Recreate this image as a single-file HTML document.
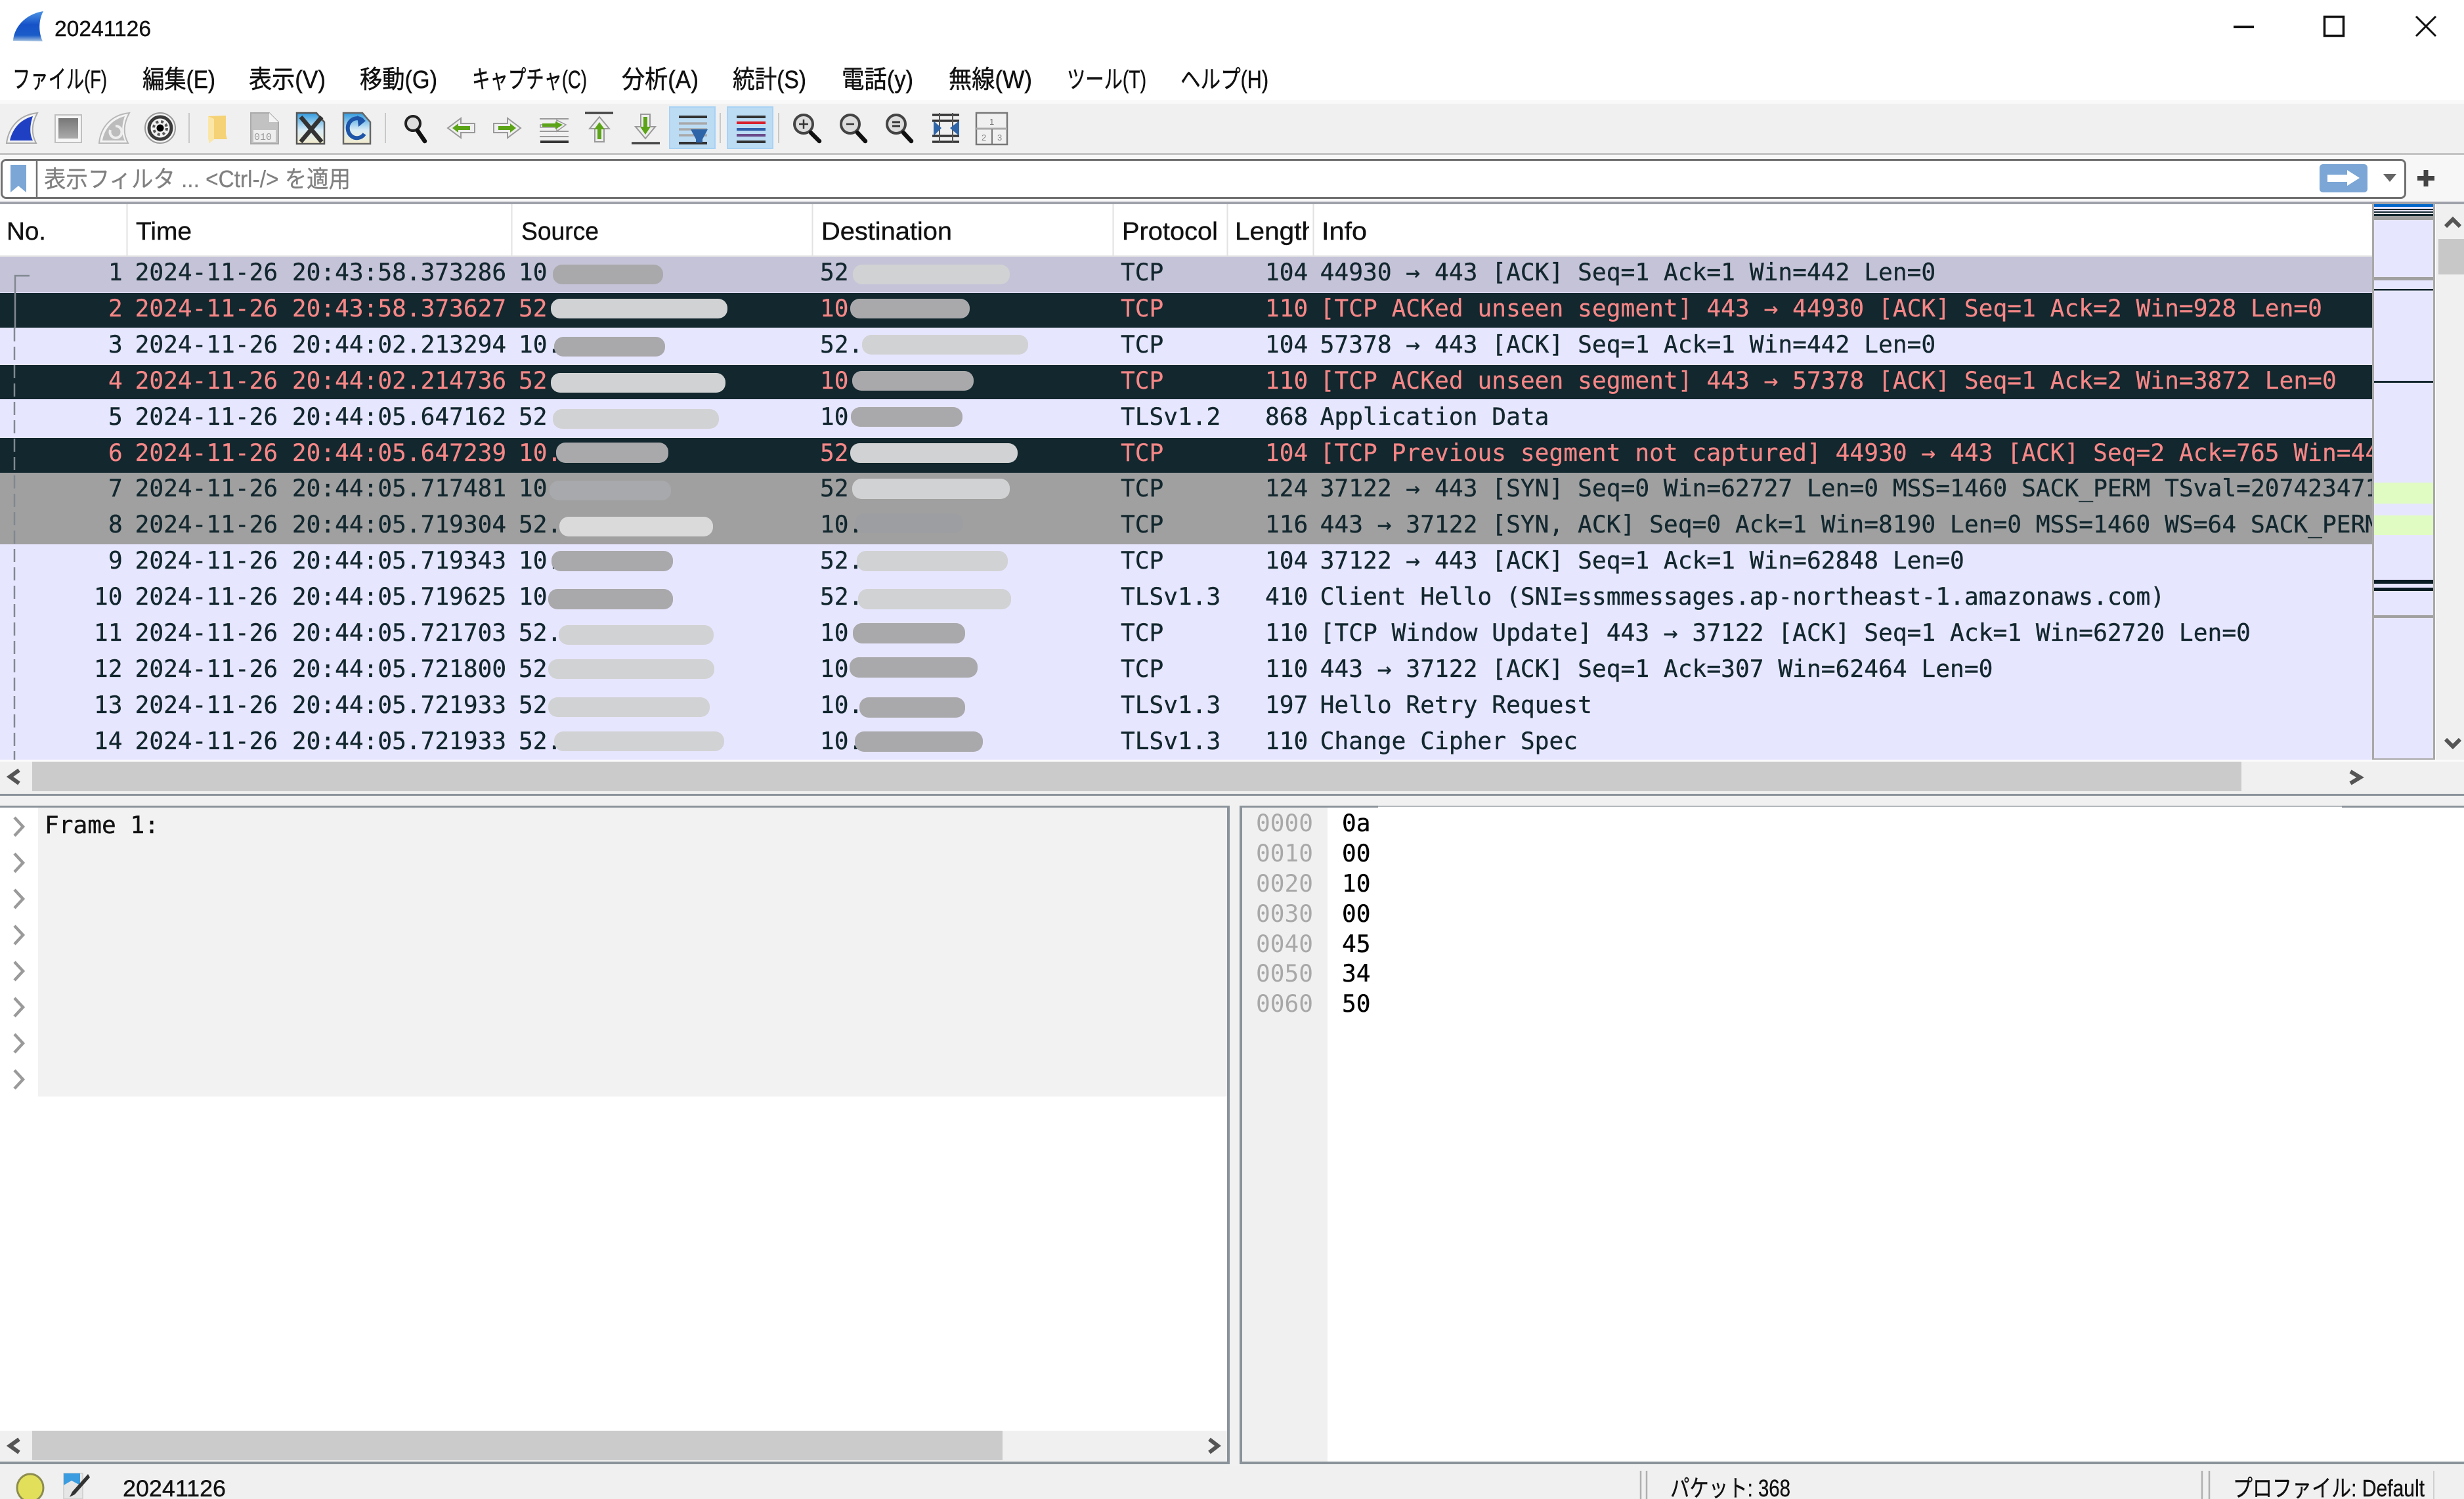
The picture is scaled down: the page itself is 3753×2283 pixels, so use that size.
<!DOCTYPE html>
<html lang="ja">
<head>
<meta charset="utf-8">
<title>20241126</title>
<style>
html,body{margin:0;padding:0;background:#fff;width:3753px;height:2283px;overflow:hidden}
svg{display:block}
text{white-space:pre}
.m{font-family:"DejaVu Sans Mono","Liberation Mono",monospace;font-size:36.13px}
.i{font-size:36.22px}
.u{font-family:"Liberation Sans","Noto Sans CJK JP",sans-serif}
.j{font-family:"Liberation Sans","Noto Sans CJK JP",sans-serif;font-size:38px;fill:#111;stroke:#111;stroke-width:.5px}
.h{font-family:"Liberation Sans","Noto Sans CJK JP",sans-serif;font-size:38px;fill:#111;stroke:#111;stroke-width:.4px}
.n{fill:#12272e;stroke:#12272e;stroke-width:.35px}
.r{fill:#f78787;stroke:#f78787;stroke-width:.2px}
</style>
</head>
<body>
<svg xmlns="http://www.w3.org/2000/svg" width="3753" height="2283" viewBox="0 0 3753 2283">
<defs>
<linearGradient id="fin" x1="0" y1="0" x2="0" y2="1"><stop offset="0" stop-color="#4d94e4"/><stop offset=".45" stop-color="#1552c8"/><stop offset=".8" stop-color="#1a5cc8"/><stop offset="1" stop-color="#a8c4e0"/></linearGradient>
<linearGradient id="stp" x1="0" y1="0" x2="0" y2="1"><stop offset="0" stop-color="#777"/><stop offset="1" stop-color="#aaa"/></linearGradient>
<linearGradient id="sky" x1="0" y1="0" x2="0" y2="1"><stop offset="0" stop-color="#2e9ae0"/><stop offset=".55" stop-color="#d8ecf6"/><stop offset="1" stop-color="#f4eccc"/></linearGradient>
<clipPath id="cInfo"><rect x="2002" y="391" width="1611" height="770"/></clipPath>
<clipPath id="cLen"><rect x="1872" y="320" width="122" height="70"/></clipPath>
</defs>

<!-- chrome backgrounds -->
<rect width="3753" height="2283" fill="#fff"/>
<rect y="152" width="3753" height="6" fill="#f9f9f9"/>
<rect y="158" width="3753" height="75" fill="#f0f0f0"/>
<rect y="233" width="3753" height="3" fill="#c4c4c4"/>
<rect y="236" width="3753" height="70" fill="#f7f7f7"/>
<rect y="307" width="3753" height="4" fill="#9ea0aa"/>

<!-- title bar -->
<path d="M20 62C21 44 36 22 66 17C58 32 59 50 65 63Z" fill="url(#fin)"/>
<text x="83" y="55" class="u" font-size="33" fill="#111" stroke="#111" stroke-width=".4" textLength="147" lengthAdjust="spacingAndGlyphs">20241126</text>
<rect x="3402" y="39" width="31" height="4" fill="#111"/>
<rect x="3540.5" y="25.5" width="29" height="29" fill="none" stroke="#111" stroke-width="3.5"/>
<path d="M3680 25L3710 55M3710 25L3680 55" stroke="#111" stroke-width="3" fill="none"/>

<!-- menu -->
<text x="19" y="134" class="j" textLength="144" lengthAdjust="spacingAndGlyphs">ファイル(F)</text>
<text x="217" y="134" class="j" textLength="111" lengthAdjust="spacingAndGlyphs">編集(E)</text>
<text x="379" y="134" class="j" textLength="117" lengthAdjust="spacingAndGlyphs">表示(V)</text>
<text x="548" y="134" class="j" textLength="118" lengthAdjust="spacingAndGlyphs">移動(G)</text>
<text x="719" y="134" class="j" textLength="175" lengthAdjust="spacingAndGlyphs">キャプチャ(C)</text>
<text x="947" y="134" class="j" textLength="117" lengthAdjust="spacingAndGlyphs">分析(A)</text>
<text x="1116" y="134" class="j" textLength="112" lengthAdjust="spacingAndGlyphs">統計(S)</text>
<text x="1282" y="134" class="j" textLength="109" lengthAdjust="spacingAndGlyphs">電話(y)</text>
<text x="1445" y="134" class="j" textLength="127" lengthAdjust="spacingAndGlyphs">無線(W)</text>
<text x="1625" y="134" class="j" textLength="121" lengthAdjust="spacingAndGlyphs">ツール(T)</text>
<text x="1798" y="134" class="j" textLength="134" lengthAdjust="spacingAndGlyphs">ヘルプ(H)</text>

<!-- toolbar -->
<path d="M10 218C13 195 28 175 57 172C47 190 48 205 55 218Z" fill="#f4f4f4" stroke="#aaa" stroke-width="2"/>
<path d="M15 214C19 196 31 182 50 177C45 192 45 204 50 214Z" fill="#2040c4"/>
<rect x="84" y="175" width="40" height="42" fill="#f6f6f6" stroke="#c0c0c0" stroke-width="2"/>
<rect x="89" y="180" width="30" height="31" fill="url(#stp)"/>
<path d="M151 218C153 195 168 175 197 172C187 190 188 205 195 218Z" fill="#f4f4f4" stroke="#b8b8b8" stroke-width="2"/>
<path d="M156 214C159 196 171 182 190 177C185 192 185 204 190 214Z" fill="#bcbcbc"/>
<path d="M176 192a9 9 0 1 1-8 6" fill="none" stroke="#eee" stroke-width="4"/>
<circle cx="244" cy="195" r="23" fill="#f4f4f4" stroke="#9a9a9a" stroke-width="2"/>
<circle cx="244" cy="195" r="17" fill="#f2f2f2" stroke="#3a3a3a" stroke-width="5"/>
<circle cx="244" cy="195" r="10" fill="#eee" stroke="#555" stroke-width="4" stroke-dasharray="4 4"/>
<circle cx="244" cy="195" r="5.500" fill="#000"/>
<rect x="287" y="172" width="2" height="46" fill="#c8c8c8"/>
<path d="M317 177L344 176V205L346 212L326 212L319 218L317 210Z" fill="#f5d275"/>
<path d="M317 177L326 181V212L319 218L317 210Z" fill="#fbe6a8"/>
<path d="M382 172H410L424 186V219H382Z" fill="#c2c2c2" stroke="#aaa" stroke-width="2"/>
<path d="M410 172V186H424Z" fill="#f4f4f4"/>
<rect x="386" y="198" width="34" height="18" fill="#eee"/>
<text x="387" y="213" font-family="'Liberation Mono',monospace" font-size="15" fill="#999">010</text>
<path d="M452 172H482L494 186V219H452Z" fill="url(#sky)" stroke="#555" stroke-width="2.5"/>
<path d="M458 178L490 216M490 178L458 216" stroke="#333" stroke-width="6.5" fill="none"/>
<path d="M523 172H552L564 186V219H523Z" fill="url(#sky)" stroke="#666" stroke-width="2.5"/>
<path d="M553 184a14 15 0 1 0 2 20" fill="none" stroke="#1d55a8" stroke-width="6"/>
<path d="M544 176l13 8-11 9z" fill="#1d55a8"/>
<rect x="586" y="172" width="2" height="46" fill="#c8c8c8"/>
<circle cx="629" cy="188" r="11" fill="#ddd" stroke="#222" stroke-width="4"/>
<path d="M636 199L647 215" stroke="#111" stroke-width="6.5" stroke-linecap="round"/>
<path d="M682 195L702 180V188H723V202H702V210Z" fill="#eee" stroke="#999" stroke-width="2"/>
<path d="M689 195L698 188V192H716V198H698V202Z" fill="#5ba417"/>
<path d="M793 195L773 180V188H752V202H773V210Z" fill="#eee" stroke="#999" stroke-width="2"/>
<path d="M786 195L777 188V192H759V198H777V202Z" fill="#5ba417"/>
<path d="M822 181H866M822 200H866M822 208H866" stroke="#999" stroke-width="2"/>
<path d="M823 216H866" stroke="#333" stroke-width="4"/>
<path d="M823 190H848V183L862 190L848 200V194H823Z" fill="#eee" stroke="#999" stroke-width="1.5"/>
<path d="M826 188H846V185L857 190L846 197V193H826Z" fill="#5ba417"/>
<path d="M891 172H934" stroke="#444" stroke-width="3.5"/>
<path d="M913 178L928 196H920V216H906V196H898Z" fill="#eee" stroke="#999" stroke-width="2"/>
<path d="M913 186L921 197H916V212H910V197H905Z" fill="#5ba417"/>
<path d="M962 218H1005" stroke="#444" stroke-width="3.5"/>
<path d="M983 211L998 193H990V174H976V193H968Z" fill="#eee" stroke="#999" stroke-width="2"/>
<path d="M983 205L991 193H986V178H980V193H975Z" fill="#5ba417"/>
<rect x="1020" y="163" width="69" height="63" fill="#bcdcf4" stroke="#a8d2f4" stroke-width="2"/>
<path d="M1034 178H1077" stroke="#333" stroke-width="4"/>
<path d="M1034 188H1077M1034 197H1077M1034 206H1077" stroke="#a9a9a9" stroke-width="3.5"/>
<path d="M1034 218H1077" stroke="#333" stroke-width="4"/>
<path d="M1052 197H1078L1070 212H1060Z" fill="#2e65a8"/>
<rect x="1060" y="210" width="10" height="7" fill="#2e65a8"/>
<rect x="1096" y="172" width="2" height="46" fill="#c8c8c8"/>
<rect x="1108" y="163" width="69" height="63" fill="#bcdcf4" stroke="#a8d2f4" stroke-width="2"/>
<path d="M1122 178H1166" stroke="#333" stroke-width="4"/>
<path d="M1122 187H1166" stroke="#d8202c" stroke-width="4"/>
<path d="M1122 197H1166" stroke="#2e5fa8" stroke-width="4"/>
<path d="M1122 206H1166" stroke="#6a4a8a" stroke-width="4"/>
<path d="M1122 216H1166" stroke="#333" stroke-width="4"/>
<rect x="1185" y="172" width="2" height="46" fill="#c8c8c8"/>
<g fill="#ddd" stroke="#444" stroke-width="4"><circle cx="1224" cy="189" r="14"/><circle cx="1295" cy="189" r="14"/><circle cx="1365" cy="189" r="14"/></g>
<path d="M1235 202L1248 215M1306 202L1318 215M1376 202L1388 215" stroke="#111" stroke-width="6.5" stroke-linecap="round"/>
<path d="M1217 189H1231M1224 182V196M1289 189H1301" stroke="#333" stroke-width="2.5"/>
<path d="M1359 186H1371M1359 192H1371" stroke="#333" stroke-width="3"/>
<path d="M1420 175H1461M1420 184H1461M1420 207H1461M1420 216H1461" stroke="#333" stroke-width="3.5"/>
<path d="M1431 172V218M1451 172V218" stroke="#555" stroke-width="2"/>
<path d="M1422 184L1434 195L1422 207ZM1461 184L1447 195L1461 207Z" fill="#2e65a8"/>
<rect x="1487" y="172" width="47" height="48" fill="#f0f0f0" stroke="#777" stroke-width="2.5"/>
<path d="M1487 196H1534" stroke="#aaa" stroke-width="3"/>
<path d="M1511 197V220" stroke="#777" stroke-width="2"/>
<text x="1507" y="190" class="u" font-size="13" fill="#777">1</text>
<text x="1495" y="214" class="u" font-size="13" fill="#888">2</text>
<text x="1519" y="214" class="u" font-size="13" fill="#888">3</text>

<!-- filter bar -->
<rect x="2.5" y="243.5" width="3661" height="58" rx="7" fill="#fff" stroke="#707070" stroke-width="3"/>
<path d="M56 243V302" stroke="#707070" stroke-width="2.5"/>
<path d="M16 251H40V293L28 283L16 293Z" fill="#7ba6d5"/>
<text x="67" y="285" class="u" font-size="36" fill="#808080" stroke="#808080" stroke-width=".3" textLength="467" lengthAdjust="spacingAndGlyphs">表示フィルタ ... &lt;Ctrl-/&gt; を適用</text>
<rect x="3533" y="250" width="73" height="43" rx="5" fill="#7ba6d5"/>
<path d="M3545 266H3575V259L3594 271L3575 283V277H3545Z" fill="#fff"/>
<path d="M3630 265H3650L3640 277Z" fill="#666"/>
<path d="M3695 259V284M3682 271.500H3708" stroke="#444" stroke-width="7"/>

<!-- header -->
<rect y="311" width="3613" height="80" fill="#fff"/>
<rect y="389" width="3613" height="2" fill="#e3e3e3"/>
<path d="M193.500 311V390M779.500 311V390M1237.500 311V390M1695.500 311V390M1869.500 311V390M2000.500 311V390" stroke="#e2e2e2" stroke-width="2"/>
<text x="10" y="365" class="h" textLength="60" lengthAdjust="spacingAndGlyphs">No.</text>
<text x="207" y="365" class="h" textLength="85" lengthAdjust="spacingAndGlyphs">Time</text>
<text x="794" y="365" class="h" textLength="118" lengthAdjust="spacingAndGlyphs">Source</text>
<text x="1251" y="365" class="h" textLength="199" lengthAdjust="spacingAndGlyphs">Destination</text>
<text x="1709" y="365" class="h" textLength="146" lengthAdjust="spacingAndGlyphs">Protocol</text>
<g clip-path="url(#cLen)"><text x="1881" y="365" class="h" textLength="124" lengthAdjust="spacingAndGlyphs">Length</text></g>
<text x="2013" y="365" class="h" textLength="69" lengthAdjust="spacingAndGlyphs">Info</text>

<!-- rows -->
<rect y="391" width="3613" height="766" fill="#e7e6ff"/>
<rect y="391" width="3613" height="54" fill="#c5c3d8"/>
<rect y="446" width="3613" height="53" fill="#12272e"/>
<rect y="556" width="3613" height="52" fill="#12272e"/>
<rect y="667" width="3613" height="53" fill="#12272e"/>
<rect y="720" width="3613" height="109" fill="#a0a0a0"/>

<path d="M45 420H23V500" fill="none" stroke="#808890" stroke-width="2.5"/>
<path d="M22 500V1157" fill="none" stroke="#808890" stroke-width="2.5" stroke-dasharray="20 8"/>

<g class="m n">
<text x="165" y="427">1</text><text x="205.600" y="427">2024-11-26 20:43:58.373286</text><text x="790" y="427">10</text><text x="1249" y="427">52</text><text x="1707" y="427">TCP</text><text x="1927" y="427">104</text>
<text x="165" y="537">3</text><text x="205.600" y="537">2024-11-26 20:44:02.213294</text><text x="790" y="537">10.</text><text x="1249" y="537">52.</text><text x="1707" y="537">TCP</text><text x="1927" y="537">104</text>
<text x="165" y="647">5</text><text x="205.600" y="647">2024-11-26 20:44:05.647162</text><text x="790" y="647">52</text><text x="1249" y="647">10</text><text x="1707" y="647">TLSv1.2</text><text x="1927" y="647">868</text>
<text x="165" y="756">7</text><text x="205.600" y="756">2024-11-26 20:44:05.717481</text><text x="790" y="756">10</text><text x="1249" y="756">52</text><text x="1707" y="756">TCP</text><text x="1927" y="756">124</text>
<text x="165" y="811">8</text><text x="205.600" y="811">2024-11-26 20:44:05.719304</text><text x="790" y="811">52.</text><text x="1249" y="811">10.</text><text x="1707" y="811">TCP</text><text x="1927" y="811">116</text>
<text x="165" y="866">9</text><text x="205.600" y="866">2024-11-26 20:44:05.719343</text><text x="790" y="866">10.</text><text x="1249" y="866">52.</text><text x="1707" y="866">TCP</text><text x="1927" y="866">104</text>
<text x="143" y="921">10</text><text x="205.600" y="921">2024-11-26 20:44:05.719625</text><text x="790" y="921">10</text><text x="1249" y="921">52.</text><text x="1707" y="921">TLSv1.3</text><text x="1927" y="921">410</text>
<text x="143" y="976">11</text><text x="205.600" y="976">2024-11-26 20:44:05.721703</text><text x="790" y="976">52.</text><text x="1249" y="976">10</text><text x="1707" y="976">TCP</text><text x="1927" y="976">110</text>
<text x="143" y="1031">12</text><text x="205.600" y="1031">2024-11-26 20:44:05.721800</text><text x="790" y="1031">52</text><text x="1249" y="1031">10</text><text x="1707" y="1031">TCP</text><text x="1927" y="1031">110</text>
<text x="143" y="1086">13</text><text x="205.600" y="1086">2024-11-26 20:44:05.721933</text><text x="790" y="1086">52</text><text x="1249" y="1086">10.</text><text x="1707" y="1086">TLSv1.3</text><text x="1927" y="1086">197</text>
<text x="143" y="1141">14</text><text x="205.600" y="1141">2024-11-26 20:44:05.721933</text><text x="790" y="1141">52.</text><text x="1249" y="1141">10.</text><text x="1707" y="1141">TLSv1.3</text><text x="1927" y="1141">110</text>
</g>
<g class="m r">
<text x="165" y="482">2</text><text x="205.600" y="482">2024-11-26 20:43:58.373627</text><text x="790" y="482">52</text><text x="1249" y="482">10</text><text x="1707" y="482">TCP</text><text x="1927" y="482">110</text>
<text x="165" y="592">4</text><text x="205.600" y="592">2024-11-26 20:44:02.214736</text><text x="790" y="592">52</text><text x="1249" y="592">10</text><text x="1707" y="592">TCP</text><text x="1927" y="592">110</text>
<text x="165" y="702">6</text><text x="205.600" y="702">2024-11-26 20:44:05.647239</text><text x="790" y="702">10.</text><text x="1249" y="702">52</text><text x="1707" y="702">TCP</text><text x="1927" y="702">104</text>
</g>
<g clip-path="url(#cInfo)">
<g class="m i n">
<text x="2010.600" y="427">44930 → 443 [ACK] Seq=1 Ack=1 Win=442 Len=0</text>
<text x="2010.600" y="537">57378 → 443 [ACK] Seq=1 Ack=1 Win=442 Len=0</text>
<text x="2010.600" y="647">Application Data</text>
<text x="2010.600" y="756">37122 → 443 [SYN] Seq=0 Win=62727 Len=0 MSS=1460 SACK_PERM TSval=2074234712</text>
<text x="2010.600" y="811">443 → 37122 [SYN, ACK] Seq=0 Ack=1 Win=8190 Len=0 MSS=1460 WS=64 SACK_PERM</text>
<text x="2010.600" y="866">37122 → 443 [ACK] Seq=1 Ack=1 Win=62848 Len=0</text>
<text x="2010.600" y="921">Client Hello (SNI=ssmmessages.ap-northeast-1.amazonaws.com)</text>
<text x="2010.600" y="976">[TCP Window Update] 443 → 37122 [ACK] Seq=1 Ack=1 Win=62720 Len=0</text>
<text x="2010.600" y="1031">443 → 37122 [ACK] Seq=1 Ack=307 Win=62464 Len=0</text>
<text x="2010.600" y="1086">Hello Retry Request</text>
<text x="2010.600" y="1141">Change Cipher Spec</text>
</g>
<g class="m i r">
<text x="2010.600" y="482">[TCP ACKed unseen segment] 443 → 44930 [ACK] Seq=1 Ack=2 Win=928 Len=0</text>
<text x="2010.600" y="592">[TCP ACKed unseen segment] 443 → 57378 [ACK] Seq=1 Ack=2 Win=3872 Len=0</text>
<text x="2010.600" y="702">[TCP Previous segment not captured] 44930 → 443 [ACK] Seq=2 Ack=765 Win=4444</text>
</g>
</g>

<!-- pills (drawn over the address text) -->
<g fill="#a9a9ab">
<rect x="842" y="403" width="168" height="30" rx="14"/>
<rect x="844" y="513" width="169" height="30" rx="14"/>
<rect x="847" y="674" width="171" height="31" rx="14"/>
<rect x="840" y="839" width="185" height="31" rx="14"/>
<rect x="835" y="897" width="190" height="31" rx="14"/>
<rect x="1295" y="455" width="182" height="30" rx="14"/>
<rect x="1298" y="565" width="185" height="30" rx="14"/>
<rect x="1296" y="620" width="170" height="30" rx="14"/>
<rect x="1299" y="949" width="171" height="31" rx="14"/>
<rect x="1294" y="1001" width="195" height="31" rx="14"/>
<rect x="1309" y="1062" width="161" height="31" rx="14"/>
<rect x="1302" y="1114" width="195" height="31" rx="14"/>
</g>
<g fill="#d1d2d3">
<rect x="839" y="455" width="269" height="30" rx="14"/>
<rect x="839" y="568" width="266" height="30" rx="14"/>
<rect x="842" y="623" width="253" height="30" rx="14"/>
<rect x="852" y="787" width="234" height="30" rx="14" fill="#dadada"/>
<rect x="1305" y="839" width="230" height="31" rx="14"/>
<rect x="1307" y="897" width="233" height="31" rx="14"/>
<rect x="851" y="952" width="236" height="30" rx="14"/>
<rect x="835" y="1004" width="253" height="30" rx="14"/>
<rect x="835" y="1062" width="246" height="30" rx="14"/>
<rect x="844" y="1114" width="259" height="30" rx="14"/>
<rect x="1299" y="403" width="239" height="30" rx="14"/>
<rect x="1313" y="510" width="253" height="30" rx="14"/>
<rect x="1295" y="675" width="255" height="30" rx="14"/>
<rect x="1298" y="729" width="240" height="31" rx="14"/>
</g>
<rect x="837" y="732" width="185" height="30" rx="14" fill="#a8a9ad"/>
<rect x="1302" y="782" width="165" height="30" rx="14" fill="#9c9ea2"/>

<!-- right strip + scrollbar -->
<rect x="3710" y="311" width="43" height="850" fill="#f0f0f0"/>
<rect x="3714" y="364" width="39" height="54" fill="#c8c8c8"/>
<path d="M3725 345L3736 334L3747 345M3725 1126L3736 1137L3747 1126" fill="none" stroke="#555" stroke-width="6"/>
<rect x="3614.500" y="311" width="93" height="845.500" fill="#e7e6ff" stroke="#a8a8a8" stroke-width="3"/>
<rect x="3616" y="311" width="90" height="4" fill="#0066cc"/>
<rect x="3616" y="318" width="90" height="2" fill="#12272e"/>
<rect x="3616" y="322" width="90" height="2" fill="#12272e"/>
<rect x="3616" y="326" width="90" height="3" fill="#12272e"/>
<rect x="3616" y="329" width="90" height="6" fill="#a0a0a0"/>
<rect x="3616" y="422" width="90" height="5" fill="#a0a0a0"/>
<rect x="3616" y="440" width="90" height="2.500" fill="#12272e"/>
<rect x="3616" y="580" width="90" height="3" fill="#12272e"/>
<rect x="3616" y="735" width="90" height="32" fill="#e0fcc2"/>
<rect x="3616" y="785" width="90" height="30" fill="#e0fcc2"/>
<rect x="3616" y="883" width="90" height="6" fill="#0a1c24"/>
<rect x="3616" y="895" width="90" height="5" fill="#0a1c24"/>
<rect x="3616" y="937" width="90" height="4" fill="#a0a0a0"/>

<!-- packet list h-scroll -->
<rect y="1157" width="3753" height="3" fill="#fbfbfb"/>
<rect y="1160" width="3753" height="50" fill="#f0f0f0"/>
<rect x="49" y="1160" width="3365" height="45" fill="#cbcbcb"/>
<path d="M29 1173L15 1183L29 1193" fill="none" stroke="#555" stroke-width="6"/>
<path d="M3580 1175L3595 1184L3580 1193" fill="none" stroke="#555" stroke-width="6"/>
<rect y="1209" width="3753" height="3" fill="#8a929a"/>
<rect y="1212" width="3753" height="16" fill="#f1f1f1"/>
<rect y="1227" width="2099" height="3" fill="#8a929a"/>
<rect x="2099" y="1227" width="1468" height="2" fill="#b4b8bc"/>
<rect x="3567" y="1227" width="186" height="3" fill="#8a929a"/>

<!-- tree pane -->
<rect x="58" y="1230" width="1811" height="440" fill="#f2f2f2"/>
<g fill="none" stroke="#9a9a9a" stroke-width="4.500">
<path d="M22 1245L35 1259L22 1273"/>
<path d="M22 1300L35 1314L22 1328"/>
<path d="M22 1355L35 1369L22 1383"/>
<path d="M22 1410L35 1424L22 1438"/>
<path d="M22 1465L35 1479L22 1493"/>
<path d="M22 1520L35 1534L22 1548"/>
<path d="M22 1575L35 1589L22 1603"/>
<path d="M22 1630L35 1644L22 1658"/>
</g>
<text x="68" y="1269" class="m" fill="#111" stroke="#111" stroke-width=".35">Frame 1:</text>

<!-- tree h-scroll -->
<rect y="2179" width="1869" height="47" fill="#f0f0f0"/>
<rect x="49" y="2179" width="1478" height="45" fill="#cbcbcb"/>
<path d="M29 2192L15 2202L29 2212" fill="none" stroke="#555" stroke-width="6"/>
<path d="M1842 2192L1855 2202L1842 2212" fill="none" stroke="#555" stroke-width="6"/>

<!-- hex pane -->
<rect x="1873" y="1212" width="15" height="1020" fill="#f1f1f1"/>
<rect x="1892" y="1230" width="130" height="996" fill="#f0f0f0"/>
<rect x="1869" y="1228" width="4" height="1002" fill="#8a929a"/>
<rect x="1888" y="1228" width="4" height="1002" fill="#8a929a"/>
<g class="m" fill="#a8a8a8">
<text x="1913" y="1266">0000</text><text x="1913" y="1312">0010</text><text x="1913" y="1358">0020</text><text x="1913" y="1404">0030</text><text x="1913" y="1450">0040</text><text x="1913" y="1495">0050</text><text x="1913" y="1541">0060</text>
</g>
<g class="m" fill="#000" stroke="#000" stroke-width=".35">
<text x="2044" y="1266">0a</text><text x="2044" y="1312">00</text><text x="2044" y="1358">10</text><text x="2044" y="1404">00</text><text x="2044" y="1450">45</text><text x="2044" y="1495">34</text><text x="2044" y="1541">50</text>
</g>

<!-- status bar -->
<rect y="2226" width="3753" height="4" fill="#8a929a"/>
<rect y="2230" width="3753" height="53" fill="#f0f0f0"/>
<rect x="1873" y="2226" width="15" height="6" fill="#f1f1f1"/>
<ellipse cx="46" cy="2266" rx="20" ry="21" fill="#e2e05a" stroke="#8c8c50" stroke-width="3"/>
<path d="M97 2244H126V2283H97Z" fill="#e6e6e6" stroke="#ccc" stroke-width="1.500"/>
<path d="M97 2244H122V2262L109 2255L97 2262Z" fill="#3b9ce0"/>
<path d="M134 2245L110 2272L106 2280L114 2276L137 2250Z" fill="#333"/>
<text x="187" y="2279" class="u" font-size="35" fill="#111" stroke="#111" stroke-width=".4" textLength="157" lengthAdjust="spacingAndGlyphs">20241126</text>
<path d="M2499 2240V2283M2508 2240V2283M3354 2240V2283M3365 2240V2283" stroke="#b0b0b0" stroke-width="2.500"/>
<path d="M3707 2240V2283" stroke="#d0d0d0" stroke-width="2"/>
<text x="2544" y="2279" class="u" font-size="36" fill="#111" stroke="#111" stroke-width=".4" textLength="183" lengthAdjust="spacingAndGlyphs">パケット: 368</text>
<text x="3401" y="2279" class="u" font-size="36" fill="#111" stroke="#111" stroke-width=".4" textLength="292" lengthAdjust="spacingAndGlyphs">プロファイル: Default</text>
</svg>
</body>
</html>
